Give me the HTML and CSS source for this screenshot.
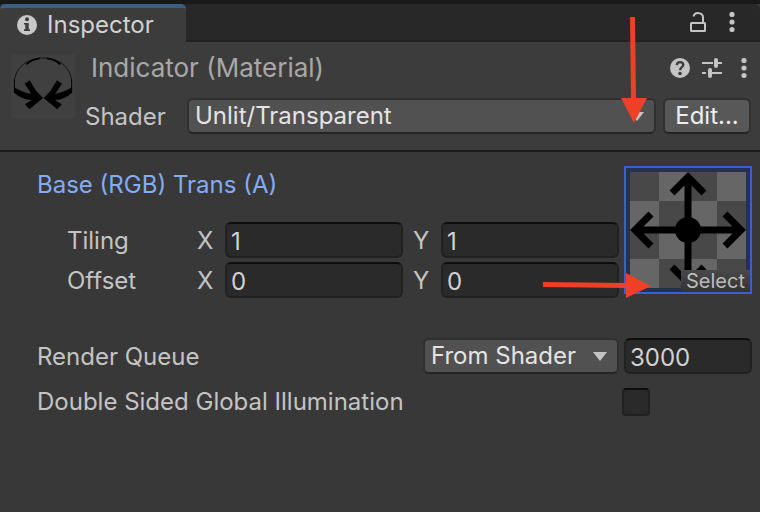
FILE: index.html
```html
<!DOCTYPE html>
<html lang="en">
<head>
<meta charset="utf-8">
<title>Inspector</title>
<link rel="stylesheet" href="styles.css">
</head>
<body>
<div class="window">
  <header class="tabbar">
    <button class="tab" type="button">
      <svg class="tab-icon" viewBox="0 0 20 20" width="20" height="20" aria-hidden="true">
        <circle cx="10" cy="10" r="10" fill="#c8c8c8"/>
        <circle cx="10" cy="4.2" r="2" fill="#3c3c3c"/>
        <path d="M7 8h4.700v6.300H13V16H7v-1.700h1.300V9.500H7z" fill="#3c3c3c"/>
      </svg>
      <span>Inspector</span>
    </button>
    <div class="tabbar-tools">
      <button class="icon-button" type="button" aria-label="Lock">
        <svg viewBox="0 0 16 20" width="16" height="20" fill="none" stroke="#c4c4c4" stroke-width="2">
          <rect x="1" y="11" width="14" height="8" rx=".5"/>
          <path d="M3.500 4.500C4 2.300 5.500 1 8 1c3 0 5 2 5 4.500V11"/>
        </svg>
      </button>
      <button class="icon-button" type="button" aria-label="Tab menu">
        <svg viewBox="0 0 6 20" width="6" height="20" fill="#c4c4c4"><circle cx="3" cy="2.500" r="2.600"/><circle cx="3" cy="10" r="2.600"/><circle cx="3" cy="17.500" r="2.600"/></svg>
      </button>
    </div>
  </header>

  <section class="asset">
    <svg class="asset-preview" viewBox="0 0 192 192" width="64" height="64" aria-hidden="true">
      <rect width="192" height="192" fill="#404040"/>
      <g fill="none" stroke="#000">
        <path d="M10 82C14 40 48 13 96 12s83 28 86 70" stroke-width="2"/>
        <path d="M46 31Q60 17 86 13M108 13Q134 17 148 31" stroke-width="5"/>
        <path d="M10 76v40M182 76v40" stroke-width="3"/>
      </g>
      <path d="M9 99Q30 115 61 119L41 89 56 79 75 110 96 132 55 166 42 151 62 138Q32 136 9 116z"/>
      <path d="M183 99Q162 115 133 119L153 89 138 79 119 110 98 132 139 166 152 151 132 138Q162 136 183 116z"/>
    </svg>
    <div class="asset-main">
      <div class="asset-title">
        <h1>Indicator (Material)</h1>
        <div class="asset-tools">
          <button class="icon-button" type="button" aria-label="Help">
            <svg viewBox="0 0 20 20" width="20" height="20">
              <circle cx="10" cy="10" r="10" fill="#c4c4c4"/>
              <path d="M6.800 7.200C7 5.200 8.200 4.200 10 4.200c2 0 3.300 1.100 3.300 2.800C13.300 9.200 10 9.300 10 12.300" fill="none" stroke="#3c3c3c" stroke-width="2.300"/>
              <circle cx="10" cy="15.500" r="1.800" fill="#3c3c3c"/>
            </svg>
          </button>
          <button class="icon-button" type="button" aria-label="Presets">
            <svg viewBox="0 0 20 20" width="20" height="20" fill="none" stroke="#c4c4c4">
              <path d="M0 5h11M16 5h4M0 15h4M10 15h10" stroke-width="2"/>
              <path d="M14 2v6M8 12v6" stroke-width="4" stroke-linecap="round"/>
            </svg>
          </button>
          <button class="icon-button" type="button" aria-label="More options">
            <svg viewBox="0 0 6 20" width="6" height="20" fill="#c4c4c4"><circle cx="3" cy="2.500" r="2.600"/><circle cx="3" cy="10" r="2.600"/><circle cx="3" cy="17.500" r="2.600"/></svg>
          </button>
        </div>
      </div>
      <div class="shader-row">
        <label for="shader">Shader</label>
        <div class="dropdown shader-dropdown">
          <select id="shader"><option>Unlit/Transparent</option></select>
          <svg class="caret" viewBox="0 0 14 9" width="14" height="9" aria-hidden="true"><path d="M0 0h14L7 9z"/></svg>
        </div>
        <button class="edit" type="button">Edit...</button>
      </div>
    </div>
  </section>

  <main class="properties">
    <div class="texture">
      <div class="texture-fields">
        <h2>Base (RGB) Trans (A)</h2>
        <div class="vector">
          <span>Tiling</span>
          <label for="tx">X</label><input id="tx" type="text" value="1">
          <label class="second" for="ty">Y</label><input id="ty" type="text" value="1">
        </div>
        <div class="vector">
          <span>Offset</span>
          <label for="ox">X</label><input id="ox" type="text" value="0">
          <label class="second" for="oy">Y</label><input id="oy" type="text" value="0">
        </div>
      </div>
      <button class="texture-slot" type="button">
        <svg viewBox="0 0 116 116" width="116" height="116" aria-hidden="true">
          <rect width="116" height="116" fill="#484848"/>
          <path fill="#666" d="M29 0h29v29H29zM87 0h29v29H87zM0 29h29v29H0zM58 29h29v29H58zM29 58h29v29H29zM87 58h29v29H87zM0 87h29v29H0zM58 87h29v29H58z"/>
          <circle cx="58" cy="58" r="13"/>
          <path d="M58 4v108M4 58h108M42 21 58 5 74 21M42 95 58 111 74 95M21 42 5 58 21 74M95 42 111 58 95 74" fill="none" stroke="#000" stroke-width="7"/>
        </svg>
        <span class="select-tag">Select</span>
      </button>
    </div>

    <div class="property queue">
      <label for="queue">Render Queue</label>
      <div class="dropdown queue-dropdown">
        <select id="queue"><option>From Shader</option></select>
        <svg class="caret" viewBox="0 0 14 9" width="14" height="9" aria-hidden="true"><path d="M0 0h14L7 9z"/></svg>
      </div>
      <input class="queue-value" type="text" value="3000" aria-label="Render queue value">
    </div>
    <div class="property illumination">
      <label for="dsgi">Double Sided Global Illumination</label>
      <div class="check"><input id="dsgi" type="checkbox"></div>
    </div>
  </main>

  <svg class="pointer pointer-shader" viewBox="0 0 26 108" width="26" height="108" aria-hidden="true"><path d="M9 0h5l1 81h11L13 106 0 81h10z"/></svg>
  <svg class="pointer pointer-select" viewBox="0 0 108 26" width="108" height="26" aria-hidden="true"><path d="M0 9l83 1V0l25 13-25 12V15L0 14z"/></svg>
</div>
</body>
</html>
```

FILE: styles.css
```css
* {
  box-sizing: border-box;
}

body {
  margin: 0;
  background: #383838;
  color: #c4c4c4;
  font: 24px/28px Inter, "Liberation Sans", sans-serif;
}

button,
input,
select {
  margin: 0;
  font: inherit;
  color: inherit;
}

h1,
h2 {
  margin: 0;
  font-size: 24px;
  font-weight: 400;
}

svg {
  display: block;
}

.window {
  position: relative;
  min-height: 100vh;
  border-top: 4px solid #191919;
}

.tabbar {
  display: flex;
  justify-content: space-between;
  height: 38px;
  background: #282828;
  box-shadow: inset 0 -2px #232323;
  border-top-right-radius: 6px;
}

.tab {
  display: flex;
  align-items: center;
  gap: 10px;
  padding: 0 32px 0 17px;
  border: 0;
  border-top: 4px solid #3a5f85;
  border-radius: 5px 5px 0 0;
  background: #3c3c3c;
  color: #d2d2d2;
}

.tabbar-tools,
.asset-tools {
  display: flex;
  align-items: center;
}

.tabbar-tools {
  gap: 23px;
  padding: 0 25px 2px 0;
}

.icon-button {
  padding: 0;
  border: 0;
  background: none;
}

.asset {
  display: flex;
  gap: 10px;
  padding: 12px 9px 16px 11px;
  border-bottom: 2px solid #1a1a1a;
  background: #3c3c3c;
}

.asset-main {
  flex: 1;
}

.asset-title {
  display: flex;
  align-items: center;
  justify-content: space-between;
  margin-bottom: 16px;
  padding-left: 6px;
}

.asset-title h1 {
  color: #a8a8a8;
  font-size: 26px;
}

.asset-tools {
  gap: 12px;
}

.asset-tools .icon-button:last-child {
  margin: 0 4px 0 7px;
}

.shader-row {
  display: flex;
  align-items: center;
}

.shader-row label {
  width: 102px;
  padding-top: 2px;
}

.dropdown {
  position: relative;
}

.shader-dropdown {
  flex: 1;
  margin-right: 7px;
}

.dropdown select,
.edit {
  display: block;
  width: 100%;
  height: 36px;
  padding: 0 6px;
  border: 2px solid #303030;
  border-bottom-color: #242424;
  border-radius: 6px;
  background: #515151;
  color: #e4e4e4;
  appearance: none;
}

.shader-row .edit {
  width: 88px;
  padding: 0;
  background: #585858;
  color: #eee;
}

.caret {
  position: absolute;
  top: 14px;
  right: 12px;
  fill: #c4c4c4;
}

.properties {
  padding: 14px 8px 0 0;
}

.texture {
  display: flex;
  align-items: flex-start;
  gap: 5px;
}

.texture-fields {
  flex: 1;
}

.texture-fields h2 {
  margin-bottom: 18px;
  padding-left: 37px;
  color: #84acf5;
  line-height: 38px;
}

.vector {
  display: grid;
  grid-template-columns: 130px 28px 1fr 38px 1fr;
  align-items: center;
  padding-left: 67px;
}

.vector span,
.vector label,
.queue label {
  padding-top: 2px;
}

.vector + .vector {
  margin-top: 4px;
}

.vector .second {
  padding-left: 10px;
}

input[type="text"] {
  width: 100%;
  min-width: 0;
  height: 36px;
  padding: 2px 4px 0;
  border: 2px solid #212121;
  border-top-color: #0d0d0d;
  border-radius: 6px;
  background: #2a2a2a;
  color: #d2d2d2;
}

.texture-slot {
  position: relative;
  padding: 4px;
  border: 2px solid #3a5fd5;
  background: #26314f;
}

.select-tag {
  position: absolute;
  right: 0;
  bottom: 0;
  padding: 0 5px;
  background: linear-gradient(#484848, #333);
  color: #bcbcbc;
  font-size: 20px;
  line-height: 22px;
}

.property {
  display: flex;
  align-items: center;
  gap: 5px;
  padding-left: 37px;
}

.property label {
  flex: 1;
}

.queue {
  margin-top: 40px;
}

.queue-dropdown {
  width: 196px;
}

.property .queue-value {
  width: 128px;
}

.illumination {
  margin-top: 14px;
}

.check {
  width: 130px;
}

.check input {
  display: block;
  width: 28px;
  height: 28px;
  border: 2px solid #212121;
  border-top-color: #0d0d0d;
  border-radius: 4px;
  background: #2a2a2a;
  appearance: none;
}

.pointer {
  position: absolute;
  fill: #ee4026;
  pointer-events: none;
}

.pointer-shader {
  top: 13px;
  right: 113px;
}

.pointer-select {
  top: 269px;
  right: 109px;
}
```
